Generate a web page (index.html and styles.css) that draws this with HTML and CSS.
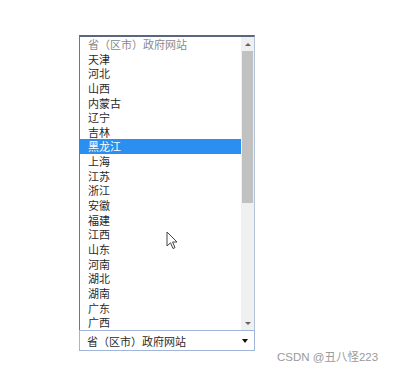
FILE: index.html
```html
<!DOCTYPE html>
<html>
<head>
<meta charset="utf-8">
<link rel="stylesheet" href="styles.css">
</head>
<body>
<div class="page">
  <div class="dropdown">
    <div class="listbox">
      <div class="options">
        <div class="opt placeholder">省（区市）政府网站</div>
        <div class="opt">天津</div>
        <div class="opt">河北</div>
        <div class="opt">山西</div>
        <div class="opt">内蒙古</div>
        <div class="opt">辽宁</div>
        <div class="opt">吉林</div>
        <div class="opt selected">黑龙江</div>
        <div class="opt">上海</div>
        <div class="opt">江苏</div>
        <div class="opt">浙江</div>
        <div class="opt">安徽</div>
        <div class="opt">福建</div>
        <div class="opt">江西</div>
        <div class="opt">山东</div>
        <div class="opt">河南</div>
        <div class="opt">湖北</div>
        <div class="opt">湖南</div>
        <div class="opt">广东</div>
        <div class="opt">广西</div>
      </div>
      <div class="scrollbar">
        <div class="arrow up"></div>
        <div class="track"><div class="thumb"></div></div>
        <div class="arrow down"></div>
      </div>
    </div>
    <div class="select">
      <span>省（区市）政府网站</span>
      <span class="caret"></span>
    </div>
  </div>
  <svg class="cursor" width="13" height="20" viewBox="0 0 13 20">
    <path d="M1 1 L1 15 L4.5 11.8 L7 17.5 L9 16.6 L6.6 11 L11 11 Z" fill="#fff" stroke="#444" stroke-width="1" stroke-linejoin="round"/>
  </svg>
  <div class="watermark">CSDN @丑八怪223</div>
</div>
</body>
</html>
```
FILE: styles.css
```css
html, body {
  margin: 0;
  padding: 0;
  background: #fff;
}
.page {
  position: relative;
  width: 393px;
  height: 371px;
  overflow: hidden;
  padding: 35px 0 0 79px;
  box-sizing: border-box;
  font-family: "Noto Sans CJK SC", "Noto Sans", sans-serif;
}
.dropdown {
  width: 176px;
  display: flex;
  flex-direction: column;
}
.listbox {
  display: flex;
  border-top: 2px solid #5a6680;
  border-left: 1px solid #6f7580;
  border-right: 1px solid #b4c2d8;
  height: 295px;
  box-sizing: border-box;
}
.options {
  flex: 1;
  display: flex;
  flex-direction: column;
}
.opt {
  height: 14.65px;
  line-height: 14.65px;
  font-size: 11px;
  color: #2a2a2a;
  padding-left: 8px;
  white-space: nowrap;
}
.opt.placeholder {
  color: #8a8a8a;
}
.opt.selected {
  background: #2a8ff0;
  color: #fff;
}
.scrollbar {
  width: 13px;
  background: #f0f0f0;
  display: flex;
  flex-direction: column;
  align-items: center;
}
.arrow {
  height: 14px;
  width: 13px;
  display: flex;
  align-items: center;
  justify-content: center;
}
.arrow::before {
  content: "";
  width: 0;
  height: 0;
  border-left: 3.5px solid transparent;
  border-right: 3.5px solid transparent;
}
.arrow.up::before {
  border-bottom: 3.5px solid #606060;
}
.arrow.down::before {
  border-top: 3.5px solid #606060;
}
.track {
  flex: 1;
  width: 13px;
  display: flex;
  justify-content: center;
}
.thumb {
  width: 11px;
  height: 152px;
  background: #c1c1c1;
}
.select {
  height: 21px;
  border: 1px solid #9fb5da;
  box-sizing: border-box;
  display: flex;
  align-items: center;
  justify-content: space-between;
  padding: 0 6px 0 7px;
  font-size: 11px;
  color: #2a2a2a;
}
.caret {
  width: 0;
  height: 0;
  border-left: 3.5px solid transparent;
  border-right: 3.5px solid transparent;
  border-top: 4px solid #111;
}
.cursor {
  position: absolute;
  left: 166px;
  top: 231px;
}
.watermark {
  position: absolute;
  left: 277px;
  top: 348px;
  font-family: "Liberation Sans", "Noto Sans CJK SC", sans-serif;
  font-size: 11.5px;
  color: #9a9a9a;
}
```
